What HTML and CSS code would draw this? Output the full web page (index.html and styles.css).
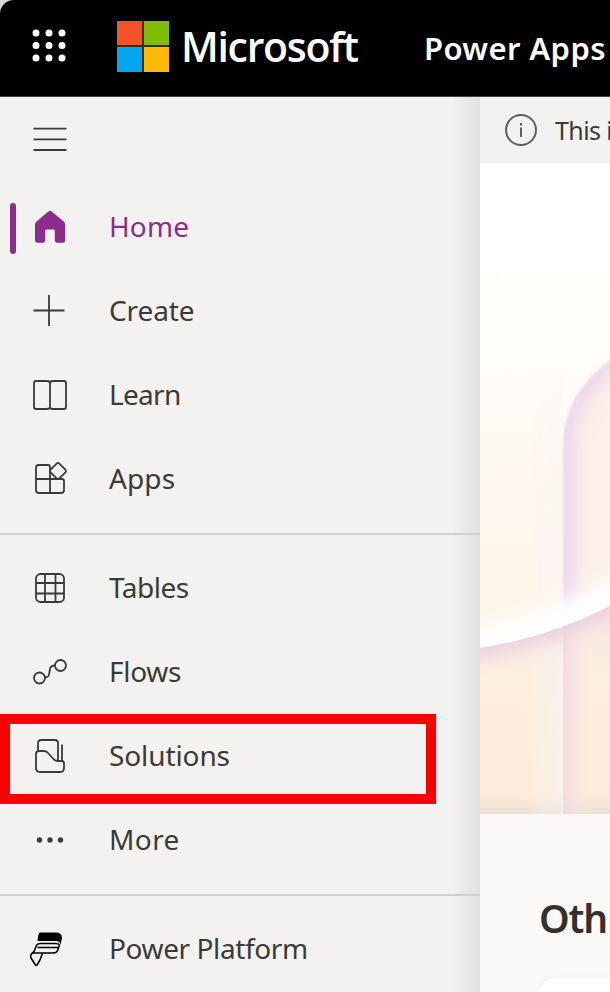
FILE: index.html
```html
<!DOCTYPE html>
<html lang="en">
<head>
<meta charset="utf-8">
<title>Power Apps</title>
<link rel="stylesheet" href="styles.css">
</head>
<body>
<div class="app">
  <header class="topbar">
    <svg class="waffle" width="36" height="34" viewBox="0 0 36 34">
      <path d="M4 4h.01M17 4h.01M30 4h.01M4 16.500h.01M17 16.500h.01M30 16.500h.01M4 29h.01M17 29h.01M30 29h.01"/>
    </svg>
    <div class="logo"><i class="red"></i><i class="green"></i><i class="blue"></i><i class="yellow"></i></div>
    <span class="brand">Microsoft</span>
    <span class="product">Power Apps</span>
  </header>
  <div class="body">
    <nav class="sidebar">
      <div class="toggle">
        <svg class="icon" viewBox="0 0 36 36"><path d="M1.500 7.700h33M1.500 18.300h33M1.500 29h33"/></svg>
      </div>
      <a class="item active">
        <svg class="icon" viewBox="0 0 36 36"><path class="solid" d="M16.300 2.400q1.700-1.400 3.400 0L32 12.800q1.200 1 1.200 2.800v16q0 2.200-2.200 2.200h-6q-2.200 0-2.200-2.200v-9.800q0-1.300-1.300-1.300h-7q-1.300 0-1.300 1.300v9.800q0 2.200-2.200 2.200H5.200Q3 33.800 3 31.600v-16q0-1.800 1.200-2.800z"/></svg>
        <span class="label home">Home</span>
      </a>
      <a class="item">
        <svg class="icon" viewBox="0 0 36 36"><path d="M1.500 17.500h31M17 2v31"/></svg>
        <span class="label create">Create</span>
      </a>
      <a class="item">
        <svg class="icon" viewBox="0 0 36 36"><path d="M4 4h11q3 0 3 2.500V30q0 2-3 2H4q-2 0-2-2V6q0-2 2-2zM18 6.500Q18 4 21 4h11q2 0 2 2v24q0 2-2 2H21q-3 0-3-2z"/></svg>
        <span class="label learn">Learn</span>
      </a>
      <a class="item">
        <svg class="icon" viewBox="0 0 36 36"><path d="M16 4H6.500Q4 4 4 6.500V29q0 3 3 3h22q3 0 3-3V20q0-2-2-2H4M18 18V6q0-2-2-2M18 18v14"/><path class="paper" d="M24.600 2.600q1.400-1.200 2.800 0l6 6q1.200 1.400 0 2.800l-6 6q-1.400 1.200-2.800 0l-6-6q-1.200-1.400 0-2.800z"/></svg>
        <span class="label apps">Apps</span>
      </a>
      <hr class="rule">
      <a class="item">
        <svg class="icon" viewBox="0 0 36 36"><rect x="4" y="4" width="28" height="28" rx="4.500"/><path d="M13 4v28M23.500 4v28M4 13h28M4 23.500h28"/></svg>
        <span class="label tables">Tables</span>
      </a>
      <a class="item">
        <svg class="icon" viewBox="0 0 36 36"><circle cx="7.500" cy="24" r="5.500"/><circle cx="28.500" cy="11.500" r="5.500"/><path d="M13 23.500q3.800 0 4.200-4l.7-4q.5-4 5.100-4"/></svg>
        <span class="label flows">Flows</span>
      </a>
      <a class="item marked">
        <svg class="icon" viewBox="0 0 36 36"><path d="M6 13V5q0-3 3-3h14q3 0 3 3v18M30 6.500V23M7 13h5q2 0 3.500 1.500l6.500 7q1.500 1.500 3.500 1.500h4q2.500 0 2.500 2.500V30q0 4-4 4H8q-4 0-4-4V16q0-3 3-3z"/></svg>
        <span class="label solutions">Solutions</span>
      </a>
      <a class="item">
        <svg class="icon" viewBox="0 0 36 36"><g class="solid"><circle cx="7.500" cy="18" r="2.700"/><circle cx="18" cy="18" r="2.700"/><circle cx="28.500" cy="18" r="2.700"/></g></svg>
        <span class="label more">More</span>
      </a>
      <hr class="rule">
      <a class="item">
        <svg class="icon platform-icon" viewBox="0 0 36 36"><path class="solid" d="M12.500 1.500H28q6 0 6 5.500l-1.500 7q-.5-4-4.500-4H9.500l.7-5.500q.5-3 2.300-3z"/><path d="M12 12.500h16q4 0 3 3l-1.500 4q-1 2.500-4 2.500H5.500L8 15.500q1-3 4-3zM9.500 16.500H30M5.500 21q-4 3-2.500 6l4.500 7q.8 1 1.600 0L12 29l2.500-7"/></svg>
        <span class="label platform">Power Platform</span>
      </a>
    </nav>
    <main class="content">
      <div class="notice">
        <svg class="info" width="34" height="34" viewBox="0 0 34 34"><circle cx="17" cy="17" r="15"/><path d="M17 14.500V24M17 10v2.500"/></svg>
        <span>This i</span>
      </div>
      <svg class="hero" width="130" height="651" viewBox="0 0 130 651">
        <defs>
          <linearGradient id="sky" x1="0" y1="0" x2="0" y2="1">
            <stop offset="0" stop-color="#fffffe"/><stop offset=".25" stop-color="#fffefb"/><stop offset=".5" stop-color="#fff7ee"/><stop offset=".7" stop-color="#fef5e8"/>
          </linearGradient>
          <linearGradient id="ground" x1="0" y1="0" x2="0" y2="1">
            <stop offset="0" stop-color="#f6e5e0"/><stop offset=".35" stop-color="#fceee0"/><stop offset=".9" stop-color="#fcecdc"/><stop offset="1" stop-color="#efdfd0"/>
          </linearGradient>
          <linearGradient id="edge" x1="0" x2="1">
            <stop offset="0" stop-color="#f8f5f5" stop-opacity="0"/><stop offset="1" stop-color="#f8f5f5" stop-opacity=".8"/>
          </linearGradient>
          <linearGradient id="seam" x1="0" x2="1">
            <stop offset="0" stop-color="#eed8e5" stop-opacity=".8"/><stop offset="1" stop-color="#fbeadd" stop-opacity="0"/>
          </linearGradient>
          <linearGradient id="fade" x1="0" y1="0" x2="0" y2="1">
            <stop offset="0" stop-color="#000"/><stop offset=".45" stop-color="#fff"/>
          </linearGradient>
          <mask id="rise"><path fill="url(#fade)" d="M40 200h60v300H40z"/></mask>
          <filter id="soft"><feGaussianBlur stdDeviation="1.200"/></filter>
          <filter id="wide" x="-30%" y="-50%" width="160%" height="200%"><feGaussianBlur stdDeviation="9"/></filter>
          <clipPath id="above"><path d="M0 0H130V443Q70 474 0 485z"/></clipPath>
          <clipPath id="below"><path d="M0 485Q70 474 130 443V651H0z"/></clipPath>
          <clipPath id="arch"><path d="M83 660V282Q83 230 135 193H300V660z"/></clipPath>
        </defs>
        <path fill="url(#sky)" d="M0 0H130V651H0z"/>
        <g clip-path="url(#above)">
          <path mask="url(#rise)" fill="url(#edge)" d="M50 200h33v290H50z"/>
          <g filter="url(#soft)">
            <path fill="#fcf0e9" d="M83 660V282Q83 230 135 193H300V660z"/>
            <g clip-path="url(#arch)"><path class="glow" filter="url(#wide)" d="M83 660V282Q83 230 135 193"/></g>
          </g>
          <path filter="url(#wide)" fill="#fff" d="M-30 475Q70 450 160 400V480L0 510z"/>
        </g>
        <g clip-path="url(#below)">
          <path fill="url(#ground)" d="M0 440H130V651H0z"/>
          <path fill="url(#edge)" d="M45 480h38v171H45z" opacity=".6"/>
          <path fill="url(#seam)" d="M83 440h32v211H83z"/>
          <path class="shade" filter="url(#wide)" d="M-20 488Q70 474 150 433"/>
        </g>
      </svg>
      <section class="more-ways">
        <h2>Oth</h2>
        <div class="card"></div>
      </section>
    </main>
  </div>
</div>
</body>
</html>
```
FILE: styles.css
```css
*, *::before, *::after { box-sizing: border-box; }
body { margin: 0; background: #d9dadb; font-family: "Noto Sans", "Open Sans", sans-serif; color: #3b3a39; }
.app { width: 610px; height: 992px; overflow: hidden; display: flex; flex-direction: column; }
.topbar { height: 97px; flex: none; display: flex; align-items: center; background: #000; color: #fff; border-top-left-radius: 14px; border-bottom: 1px solid #444; white-space: nowrap; }
.waffle { margin: -4px 0 0 32px; flex: none; fill: none; stroke: #fff; stroke-width: 7; stroke-linecap: round; }
.logo { margin: -4px 0 0 49px; width: 52px; height: 51px; display: grid; grid-template-columns: 1fr 1fr; gap: 2px; background: #3c2b10; flex: none; }
.red { background: #f35325; }
.green { background: #81bc06; }
.blue { background: #05a6f0; }
.yellow { background: #ffba08; }
.brand { margin: -4px 0 0 12px; width: 243px; flex: none; font: 600 41px/50px "Open Sans", sans-serif; letter-spacing: -1.3px; }
.product { font: 600 31px/40px "Noto Sans", sans-serif; letter-spacing: .4px; }
.body { flex: 1; display: flex; min-height: 0; }
.sidebar { width: 480px; flex: none; background: linear-gradient(90deg, transparent 452px, #ebebea 462px, #e2e3e1 480px), #f3f2f1; }
.toggle { height: 88px; padding: 24px 0 0 32px; }
.icon { width: 36px; height: 36px; flex: none; fill: none; stroke: #3b3a39; stroke-width: 1.8; overflow: visible; }
.solid { fill: currentColor; stroke: none; }
.paper { fill: #f3f2f1; }
.item { position: relative; display: flex; align-items: center; height: 84px; padding-left: 32px; gap: 41px; font-size: 28px; line-height: 40px; }
.label { white-space: nowrap; letter-spacing: -.3px; padding-bottom: 2px; }
.home, .apps { letter-spacing: .1px; }
.create, .solutions { letter-spacing: -.1px; }
.learn { letter-spacing: -.7px; }
.tables { letter-spacing: -.5px; }
.more { letter-spacing: .4px; }
.platform { letter-spacing: -.4px; }
.active { color: #8c2d8c; }
.active::before { content: ""; position: absolute; left: 10px; top: 18px; width: 6px; height: 51px; border-radius: 3px; background: #8c2d8c; }
.marked::after { content: ""; position: absolute; left: 0; top: 0; width: 436px; height: 90px; border: 10px solid #f00; }
.rule { margin: 12px 0 11px; height: 2px; border: 0; background: #d2d0ce; }
.platform-icon { margin-left: -4px; margin-right: 4px; color: #000; stroke: #000; stroke-width: 1.6; }
.content { width: 130px; flex: none; display: flex; flex-direction: column; background: #faf9f8; overflow: hidden; }
.notice { height: 66px; flex: none; display: flex; align-items: center; gap: 17px; padding: 0 0 1px 24px; background: #f3f2f1; white-space: nowrap; font-size: 25px; letter-spacing: -.6px; }
.info { flex: none; fill: none; stroke: #605e5c; stroke-width: 2; }
.hero { display: block; flex: none; }
.glow { fill: none; stroke: #ebd6eb; stroke-width: 24; }
.shade { fill: none; stroke: #e9cde0; stroke-width: 18; }
.more-ways { padding-left: 59px; }
.more-ways h2 { margin: 78px 0 35px; font-size: 39px; line-height: 51px; font-weight: 600; letter-spacing: -1.2px; color: #323130; white-space: nowrap; }
.card { width: 200px; height: 80px; border-radius: 16px; background: #fff; box-shadow: 0 0 4px #0001; }
```
